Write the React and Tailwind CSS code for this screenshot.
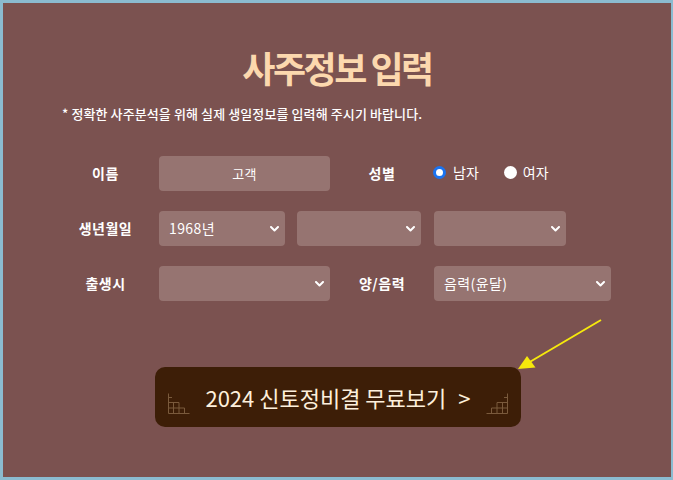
import React from "react";

const FONT = { fontFamily: '"Noto Sans CJK KR", "Noto Sans", sans-serif' };

function Chevron() {
  return (
    <svg width="9" height="6" viewBox="0 0 9 6" className="shrink-0">
      <path d="M1 1 L4.5 4.5 L8 1" fill="none" stroke="#ffffff" strokeWidth="2" strokeLinecap="round" strokeLinejoin="round" />
    </svg>
  );
}

function Select({ w, text }) {
  return (
    <div className={`${w} h-[35px] rounded-[4px] bg-[#967471] flex items-center justify-between pl-[10px] pr-[6px] text-white text-[14px] tracking-[0.4px]`}>
      <span>{text}</span>
      <Chevron />
    </div>
  );
}

function Deco({ flip }) {
  return (
    <svg width="23" height="22" viewBox="0 0 23 22" className={flip ? "-scale-x-100" : ""}>
      <g fill="none" stroke="#7a5a3c" strokeWidth="1">
        <path d="M0.5 0.5 V20.5 H21.5" />
        <path d="M0.5 4.5 H4" />
        <path d="M0.5 9.5 H11 V20.5" />
        <path d="M5.5 9.5 V20.5" />
        <path d="M0.5 15 H16.5 V20.5" />
      </g>
    </svg>
  );
}

export default function App() {
  return (
    <div
      className="relative w-[673px] h-[480px] bg-[#7b5250] border-[3px] border-r-2 border-[#8bbbd0] flex flex-col overflow-hidden"
      style={FONT}
    >
      <h1 className="pt-[46px] text-center text-[36px] leading-[36px] font-bold text-[#fcd8ae] tracking-[-2.5px]">
        사주정보 입력
      </h1>
      <p className="mt-[21px] pl-[59px] text-[13px] leading-[16px] text-white font-medium tracking-[0.1px]">
        * 정확한 사주분석을 위해 실제 생일정보를 입력해 주시기 바랍니다.
      </p>

      <div className="mt-[34px] flex flex-col gap-[20px] pl-[49px]">
        <div className="flex items-center h-[35px]">
          <div className="w-[107px] text-center text-white font-bold text-[14px] tracking-[0.5px]">이름</div>
          <div className="w-[171px] h-[35px] rounded-[4px] bg-[#967471] flex items-center justify-center text-white text-[13px] tracking-[0.3px]">
            고객
          </div>
          <div className="w-[104px] text-center text-white font-bold text-[14px] tracking-[0.5px]">성별</div>
          <div className="flex items-center -ml-[1px] mb-[2px] text-white text-[14px]">
            <span className="w-[13px] h-[13px] rounded-full bg-white border-[3px] border-[#1a73f0]" />
            <span className="ml-[7px]">남자</span>
            <span className="ml-[25px] w-[13px] h-[13px] rounded-full bg-white" />
            <span className="ml-[6px]">여자</span>
          </div>
        </div>

        <div className="flex items-center h-[35px]">
          <div className="w-[107px] text-center text-white font-bold text-[14px] tracking-[0.5px]">생년월일</div>
          <Select w="w-[126px]" text="1968년" />
          <div className="ml-[12px]"><Select w="w-[124px]" text="" /></div>
          <div className="ml-[13px]"><Select w="w-[132px]" text="" /></div>
        </div>

        <div className="flex items-center h-[35px]">
          <div className="w-[107px] text-center text-white font-bold text-[14px] tracking-[0.5px]">출생시</div>
          <Select w="w-[171px]" text="" />
          <div className="w-[104px] text-center text-white font-bold text-[14px] tracking-[0.5px]">양/음력</div>
          <Select w="w-[177px]" text="음력(윤달)" />
        </div>
      </div>

      <div className="mt-[66px] ml-[152px] relative w-[366px] h-[60px] rounded-[10px] bg-[#3d1e07] flex items-center justify-center text-[#fdf0dc] text-[22px] leading-none">
        <span>2024 신토정비결 무료보기</span>
        <span className="ml-[12px]">&gt;</span>
        <div className="absolute left-[13px] top-[26px]"><Deco /></div>
        <div className="absolute left-[330px] top-[26px]"><Deco flip /></div>
      </div>

      <svg
        className="absolute left-[-3px] top-[-3px] pointer-events-none"
        width="673"
        height="480"
        viewBox="0 0 673 480"
      >
        <line x1="601" y1="320" x2="528" y2="363" stroke="#f6e90c" strokeWidth="2" />
        <polygon points="518,369 535.5,367.5 527,356" fill="#f6e90c" />
      </svg>
    </div>
  );
}
